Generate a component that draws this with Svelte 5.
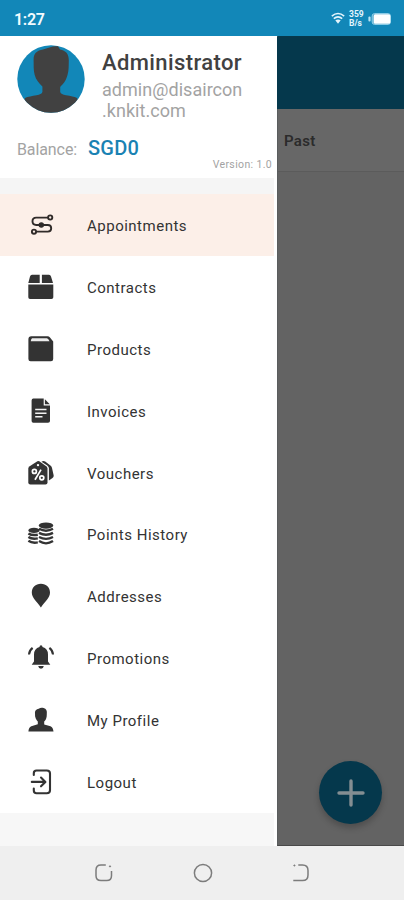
<script>
  const items = [
    { id: 'route', label: 'Appointments' },
    { id: 'box', label: 'Contracts' },
    { id: 'product', label: 'Products' },
    { id: 'invoice', label: 'Invoices' },
    { id: 'voucher', label: 'Vouchers' },
    { id: 'coins', label: 'Points History' },
    { id: 'pin', label: 'Addresses' },
    { id: 'bell', label: 'Promotions' },
    { id: 'user', label: 'My Profile' },
    { id: 'logout', label: 'Logout' }
  ];
  let active = $state('route');
</script>

<div class="screen">
  <header class="status">
    <span class="time">1:27</span>
    <div class="indicators">
      <svg width="14" height="13" viewBox="0 0 14 13" fill="none" stroke="#e4f5fc" stroke-width="1.6">
        <path d="M.8 4.2Q7-1.2 13.2 4.2M2.8 6.6Q7 3 11.2 6.6" />
        <path d="M4.3 8.3Q7 6.5 9.7 8.3L7 11.8Z" fill="#e4f5fc" stroke="none" />
      </svg>
      <div class="speed"><span>359</span><span>B/s</span></div>
      <svg width="23" height="12" viewBox="0 0 23 12">
        <rect x="4.2" y=".7" width="18.2" height="10.6" rx="2.2" fill="none" stroke="#a9dcf0" stroke-width="1" />
        <rect x="5.5" y="1.3" width="16.7" height="9.4" rx="1.5" fill="#fff" />
        <rect x="0.4" y="3.6" width="2.2" height="5" rx="1" fill="#b9e3f3" />
      </svg>
    </div>
  </header>

  <div class="body">
    <aside class="drawer">
      <section class="profile">
        <div class="who">
          <svg class="avatar" width="68" height="68" viewBox="0 0 68 68">
            <defs><clipPath id="disc"><circle cx="34" cy="34" r="33.7" /></clipPath></defs>
            <g clip-path="url(#disc)">
              <rect width="68" height="68" fill="#1287b8" />
              <path fill="#414141" d="M16.6 15C16.5 8 20 5.5 26 4.5C31 3 36 .5 41 1.3L43 4.5C49 5.5 52 9 51.8 16C51.6 21 52 25 50.5 30C49 36 46 39 43.2 42V47Q44 49.5 49 50.2C54 51 57 51.5 60 53L66 70H2L8 53C11 51.5 15 51 19.5 50.2Q24.6 49.5 25.4 47V41.5C22 38 19 35 17.7 30C16.3 25 16.8 20 16.6 15Z" />
            </g>
          </svg>
          <div class="names">
            <strong>Administrator</strong>
            <span>admin@disaircon<br />.knkit.com</span>
          </div>
        </div>
        <div class="balance"><span class="key">Balance:</span><span class="amount">SGD0</span></div>
        <div class="version">Version: 1.0</div>
      </section>

      <nav class="menu">
        {#each items as item (item.id)}
          <button class="item" class:active={active === item.id} onclick={() => (active = item.id)}>
            <svg width="28" height="28" viewBox="0 0 28 28" fill="#333">
              {#if item.id === 'route'}
                <g fill="none" stroke="#302b29" stroke-width="1.9">
                  <path d="M21.5 6.6H9.2Q5.5 6.6 5.5 10.3Q5.5 14 9.2 14H20.8Q24.2 14 24.2 17.3Q24.2 20.6 20.8 20.6H9" />
                  <circle cx="23.2" cy="6.5" r="2.1" /><circle cx="7" cy="20.7" r="2.1" />
                  <circle cx="14.3" cy="14" r="1.8" fill="#302b29" />
                </g>
              {:else if item.id === 'box'}
                <path d="M5 1.8H12.7V10H1.3L3 3.5Q3.5 1.8 5 1.8ZM14.9 1.8H22Q23.5 1.8 24 3.5L26 10H14.9ZM1.3 11.4H26.3V24.3Q26.3 26 24.5 26H3Q1.3 26 1.3 24.3Z" />
              {:else if item.id === 'product'}
                <path d="M4.3 1.2H20.5Q22 1.2 23 2.5L26.2 6.6V24Q26.2 26.2 24 26.2H3.6Q1.4 26.2 1.4 24V4.2Q1.4 1.2 4.3 1.2Z" />
                <path fill="#ededed" d="M5 3.2H20Q21.5 3.7 22.5 6.2H3.8Q3.9 4.2 5 3.2Z" />
              {:else if item.id === 'invoice'}
                <path d="M6.3 1.6H16.7V8.5H23V24Q23 25.8 21 25.8H6.3Q4.6 25.8 4.6 24V3.4Q4.6 1.6 6.3 1.6Z" />
                <path d="M17.9 2.2L22.8 7.3H17.9Z" />
                <path fill="none" stroke="#f4f4f4" stroke-width="1.5" d="M8.2 12.6H19.5M8.2 16.2H19.5M8.2 19.8H15.5" />
              {:else if item.id === 'voucher'}
                <path d="M10.4 2.2Q11.3 1.6 12.3 2.2L19.6 7.5Q20.5 8.3 20.5 9.6V23.4Q20.5 25.4 18.5 25.4H3.3Q1.3 25.4 1.3 23.4V9.6Q1.3 8.4 2.3 7.6Z" />
                <path d="M14.5 2.7Q16.5 1.4 18.2 2.6L23.7 6.8Q24.8 7.7 25 9L26.7 16.5Q26.8 18 25.5 19L21.9 21.5V9Q21.7 7.5 20.3 6.5Z" />
                <circle cx="11" cy="6.1" r="1.2" fill="#fff" />
                <g fill="none" stroke="#fff" stroke-width="1.7"><circle cx="7.4" cy="12.4" r="2" /><circle cx="14.8" cy="18.8" r="2" /><path d="M14 10.6L8 20.8" /></g>
              {:else if item.id === 'coins'}
                <ellipse cx="19" cy="5.6" rx="7.2" ry="3.2" />
                <ellipse cx="7" cy="10.4" rx="5.6" ry="2.6" />
                <path fill="none" stroke="#333" stroke-width="2.4" d="M12 8.8Q19 12.6 26 8.8M12 12.9Q19 16.6 26 12.9M12 17Q19 20.7 26 17M12 21.1Q19 25.6 26 21.1M1.4 13.4Q5 15.8 10.8 14.7M1.4 17.1Q5 19.5 10.8 18.4M1.4 20.8Q5 23.4 10.8 22.4" />
              {:else if item.id === 'pin'}
                <path d="M13.9 1.8C19.3 1.8 23 5.6 23 10.6C23 16 18 19.5 13.9 25.6C9.8 19.5 4.8 16 4.8 10.6C4.8 5.6 8.5 1.8 13.9 1.8Z" />
              {:else if item.id === 'bell'}
                <path d="M12.5 3Q12.5 1.3 14 1.3Q15.5 1.3 15.5 3Q21 4.5 21 10.5V17.5L23.3 20.8H4.7L7 17.5V10.5Q7 4.5 12.5 3ZM11.2 22.1H16.8Q16.4 24.7 14 24.7Q11.6 24.7 11.2 22.1Z" />
                <path fill="none" stroke="#333" stroke-width="2.1" d="M5.6 3.8Q2.3 6.3 2 10.5M22.4 3.8Q25.7 6.3 26 10.5" />
              {:else if item.id === 'user'}
                <path d="M8 7.6C7.8 4.3 9.3 3.4 11.7 2.8C13.4 1.5 15 1.5 16.6 2.1C19.3 2.7 20.2 4.7 19.8 8.2C20 12 18.4 14.4 17.2 15.6V18.4L23.5 20.2Q26 21.2 26.5 25.6H1.4Q1.8 21.3 4.3 20.3L10.8 18.3V15.5C9.5 14.4 7.6 11.8 8 7.6Z" />
              {:else}
                <path fill="none" stroke="#333" stroke-width="2.1" stroke-linecap="round" stroke-linejoin="round" d="M6.8 7V5.2Q6.8 2.5 9.5 2.5H19.8Q23 2.5 23 5.5V22.3Q23 25.2 19.8 25.2H9.5Q6.8 25.2 6.8 22.5V20.6M4.8 13.9H17.5M14 9.5L18.4 13.9L14 18.3" />
              {/if}
            </svg>
            <span>{item.label}</span>
          </button>
        {/each}
      </nav>
      <div class="rest"></div>
    </aside>

    <main class="page">
      <div class="appbar"></div>
      <div class="tabs"><span>Past</span></div>
      <div class="content">
        <button class="fab" aria-label="Add">
          <svg width="28" height="28" viewBox="0 0 28 28"><path d="M14 2V26M2 14H26" stroke="#848e92" stroke-width="3.4" stroke-linecap="round" /></svg>
        </button>
      </div>
    </main>
  </div>

  <footer class="system">
    <svg width="20" height="20" viewBox="0 0 20 20" fill="none" stroke="#7c7c7c" stroke-width="1.5"><path d="M11.8 2H7Q2 2 2 7V12.7Q2 17.5 7 17.5H12.7Q17.5 17.5 17.5 12.7V8" /><circle cx="16" cy="3.4" r=".6" fill="#7c7c7c" stroke-width="1" /></svg>
    <svg width="20" height="20" viewBox="0 0 20 20" fill="none" stroke="#7c7c7c" stroke-width="1.5"><circle cx="10" cy="10" r="8.6" /></svg>
    <svg width="20" height="20" viewBox="0 0 20 20" fill="none" stroke="#7c7c7c" stroke-width="1.5"><path d="M7.3 2H11.5Q17 2 17 7.5V12Q17 17.6 11.5 17.6H2.3" /><circle cx="3.4" cy="2.5" r=".6" fill="#7c7c7c" stroke-width="1" /></svg>
  </footer>
</div>

<style>
  .screen { width: 404px; height: 900px; display: flex; flex-direction: column; overflow: hidden; font-family: Roboto, "Liberation Sans", sans-serif; background: #fff; }
  button { border: 0; padding: 0; margin: 0; font: inherit; text-align: left; }
  svg { display: block; flex: none; }
  .status { height: 36px; flex: none; box-sizing: border-box; padding: 1px 13px 0 14px; background: #1287b8; display: flex; align-items: center; justify-content: space-between; }
  .time { color: #f2fbff; font-size: 16px; font-weight: 600; letter-spacing: -.3px; padding-top: 2px; }
  .indicators { display: flex; align-items: center; gap: 4px; }
  .speed { display: flex; flex-direction: column; width: 15px; font-size: 8.5px; line-height: 8.5px; font-weight: 700; color: #e4f5fc; }
  .body { flex: 1; min-height: 0; display: grid; grid-template-columns: 277px 1fr; }
  .drawer { display: flex; flex-direction: column; background: #fff; }
  .profile { height: 142px; flex: none; box-sizing: border-box; padding: 9px 5px 0 17px; }
  .who { display: flex; gap: 17px; height: 87px; }
  .names { display: flex; flex-direction: column; padding-top: 4px; }
  .names strong { font-size: 22px; line-height: 27px; font-weight: 500; color: #414141; letter-spacing: .4px; }
  .names span { font-size: 18px; line-height: 21px; color: #a3a3a3; font-weight: 400; margin-top: 3px; letter-spacing: .04px; }
  .balance { display: flex; align-items: baseline; gap: 11px; height: 26px; line-height: 26px; margin-top: 3px; }
  .key { color: #a3a3a3; font-size: 16px; letter-spacing: -.1px; }
  .amount { color: #1a82b3; font-size: 20px; font-weight: 500; letter-spacing: .2px; }
  .version { text-align: right; font-size: 10.5px; line-height: 12px; color: #a3a3a3; letter-spacing: .35px; margin-top: -2px; }
  .menu { height: 635px; flex: none; display: flex; flex-direction: column; border-top: 16px solid #f5f5f5; box-sizing: border-box; margin-right: 3px; }
  .item { flex: 1; display: flex; align-items: center; gap: 32px; padding-left: 27px; background: #fff; color: #333; font-size: 15px; font-weight: 400; letter-spacing: .5px; }
  .item span { padding-top: 2px; }
  .item.active { background: #fcefe8; }
  .rest { flex: 1; background: #f7f7f7; margin-right: 3px; }
  .page { display: flex; flex-direction: column; background: #636363; border-left: 1px solid #5a5d5e; border-top: 1px solid #06394c; border-bottom: 1px solid #494949; box-sizing: border-box; }
  .appbar { height: 72px; background: #05384c; margin-left: -1px; }
  .tabs { height: 60px; background: #676767; border-bottom: 1px solid #5b5b5b; display: flex; align-items: center; padding: 2px 0 0 6px; color: #2b2b2b; font-size: 15px; font-weight: 600; letter-spacing: .3px; }
  .content { flex: 1; display: flex; align-items: flex-end; justify-content: flex-end; padding: 0 22px 21px 0; }
  .fab { width: 63px; height: 63px; border-radius: 50%; background: #05384c; display: grid; place-items: center; box-shadow: 0 4px 6px rgba(0, 0, 0, .22); }
  .system { height: 54px; flex: none; background: #efefef; display: flex; align-items: center; justify-content: space-between; padding: 0 93px 0 94px; }
</style>
